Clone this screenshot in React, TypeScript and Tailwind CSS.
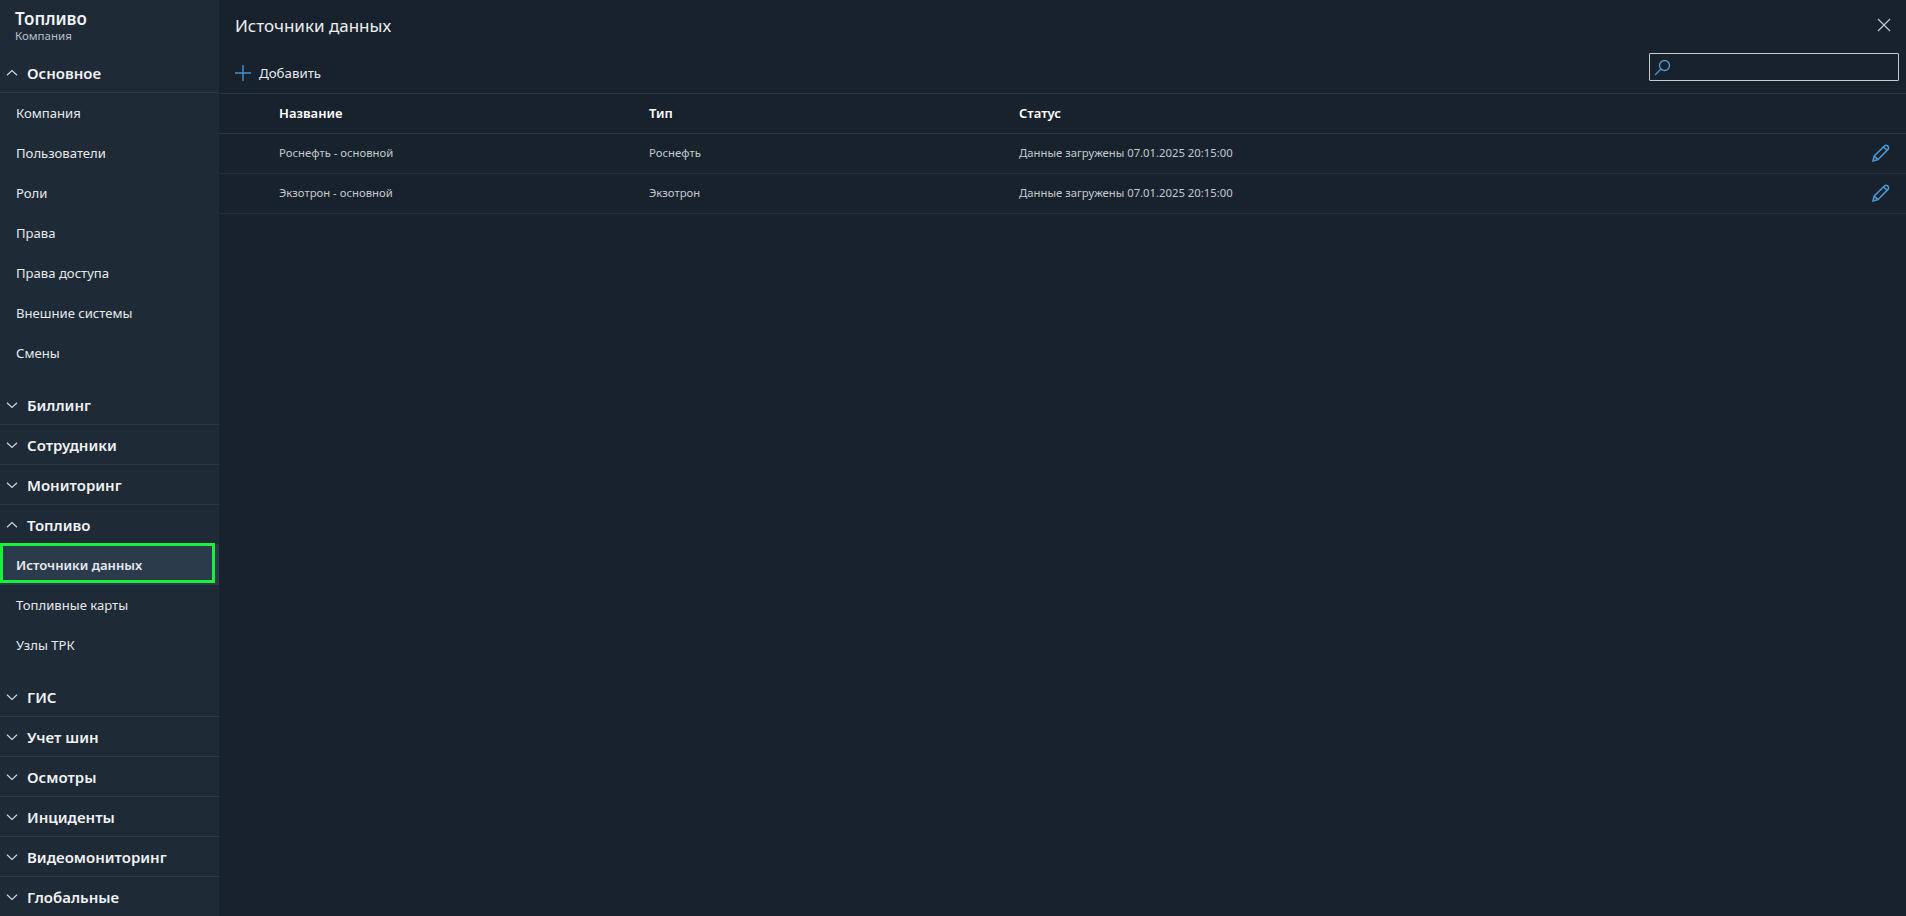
import React from "react";

const Chevron = ({ up }: { up?: boolean }) => (
  <svg width="12" height="12" viewBox="0 0 12 12" fill="none" stroke="#d0d4d8" strokeWidth="1.2" className="shrink-0">
    {up ? <path d="M1 8.3 L6 3.5 L11 8.3" /> : <path d="M1 3.7 L6 8.5 L11 3.7" />}
  </svg>
);

const Section = ({ title, up }: { title: string; up?: boolean }) => (
  <div className="h-10 shrink-0 flex items-center pl-[6px] border-b border-[#2a3947]">
    <Chevron up={up} />
    <span className="ml-[9px] text-[15px] font-semibold text-[#f0f2f4] leading-none mt-[2px]">{title}</span>
  </div>
);

const Item = ({ title, active }: { title: string; active?: boolean }) => (
  <div className={"relative h-10 shrink-0 flex items-center pl-4 pt-[2px] text-[13.1px] text-[#e6e8ea] " + (active ? "bg-[#2c3b4b] font-semibold" : "")}>
    {title}
    {active && <div className="absolute left-0 top-[-2px] w-[215px] h-[40px] border-[3px] border-[#19f13a]" />}
  </div>
);

const Pencil = () => (
  <svg width="18" height="18" viewBox="0 0 18 18" fill="none" stroke="#4a9ad8" strokeWidth="1.5">
    <path d="M1 17 L2.3 12 L12.6 1.8 Q14.2 0.6 15.8 2.1 Q17.2 3.8 16 5.4 L5.9 15.7 Z" />
    <path d="M11.6 3 L14.9 6.2" />
    <path d="M2.6 12.4 L5.6 15.4" />
  </svg>
);

const rows = [
  ["Роснефть - основной", "Роснефть"],
  ["Экзотрон - основной", "Экзотрон"],
];

export default function App() {
  return (
    <div className="h-[916px] w-[1906px] overflow-hidden flex bg-[#18222c] font-['Noto_Sans','Open_Sans',sans-serif]">
      <aside className="w-[219px] shrink-0 h-full overflow-hidden bg-[#1e2a36] flex flex-col">
        <div className="h-[53px] shrink-0 pl-[15px] pt-[8px]">
          <div className="text-[17px] font-semibold leading-[22px] text-[#f0f2f4]">Топливо</div>
          <div className="text-[11.5px] leading-[12px] text-[#b9bfc5]">Компания</div>
        </div>
        <Section title="Основное" up />
        {["Компания", "Пользователи", "Роли", "Права", "Права доступа", "Внешние системы", "Смены"].map((t) => (
          <Item key={t} title={t} />
        ))}
        <div className="h-3 shrink-0" />
        <Section title="Биллинг" />
        <Section title="Сотрудники" />
        <Section title="Мониторинг" />
        <Section title="Топливо" up />
        <Item title="Источники данных" active />
        <Item title="Топливные карты" />
        <Item title="Узлы ТРК" />
        <div className="h-3 shrink-0" />
        {["ГИС", "Учет шин", "Осмотры", "Инциденты", "Видеомониторинг", "Глобальные"].map((t) => (
          <Section key={t} title={t} />
        ))}
      </aside>
      <main className="flex-1 min-w-0 flex flex-col">
        <div className="h-[53px] shrink-0 flex items-center justify-between pl-[16px] pr-[15px]">
          <h1 className="text-[17px] text-[#eceef0] leading-none -mt-[2px]">Источники данных</h1>
          <svg width="14" height="14" viewBox="0 0 14 14" stroke="#c4c8cc" strokeWidth="1.2" className="-mt-[3px]">
            <path d="M1 1 L13 13 M13 1 L1 13" />
          </svg>
        </div>
        <div className="h-[41px] shrink-0 flex items-start justify-between border-b border-[#2b3744] pl-[16px] pr-[7px]">
          <div className="flex items-center h-[40px] gap-[8px]">
            <svg width="16" height="16" viewBox="0 0 16 16" stroke="#3f93d8" strokeWidth="1.4">
              <path d="M8 0 V16 M0 8 H16" />
            </svg>
            <span className="text-[13.3px] text-[#e6e8ea] mt-[2px]">Добавить</span>
          </div>
          <div className="w-[250px] h-[28px] border border-[#c8cbce] rounded-[1px] flex items-center pl-[4px]">
            <svg width="17" height="17" viewBox="0 0 17 17" fill="none" stroke="#4a9ad8" strokeWidth="1.3">
              <circle cx="10.5" cy="6.5" r="5" />
              <path d="M7 10 L1 16" />
            </svg>
          </div>
        </div>
        <div className="h-10 shrink-0 grid grid-cols-[370px_370px_1fr] pl-[60px] items-center border-b border-[#2b3744] text-[13px] font-semibold text-white">
          <div>Название</div>
          <div>Тип</div>
          <div>Статус</div>
        </div>
        {rows.map(([name, type]) => (
          <div key={name} className="relative h-10 shrink-0 grid grid-cols-[370px_370px_1fr] pl-[60px] items-center border-b border-[#242f3b] text-[11.3px] text-[#c5c9cd]">
            <div>{name}</div>
            <div>{type}</div>
            <div>Данные загружены 07.01.2025 20:15:00</div>
            <div className="absolute right-[16px] top-[10px]">
              <Pencil />
            </div>
          </div>
        ))}
      </main>
    </div>
  );
}
